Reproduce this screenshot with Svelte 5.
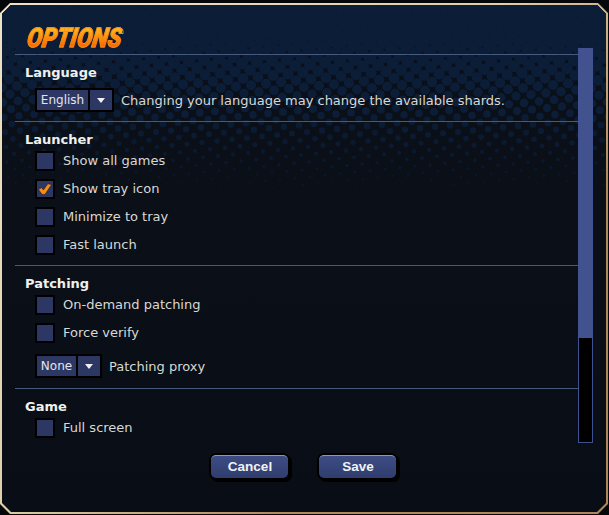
<script>
	const sections = [
		{ title: "Language", rows: [{ type: "select", value: "English", width: 51, label: "Changing your language may change the available shards." }] },
		{
			title: "Launcher",
			rows: [
				{ type: "check", label: "Show all games" },
				{ type: "check", label: "Show tray icon", checked: true },
				{ type: "check", label: "Minimize to tray" },
				{ type: "check", label: "Fast launch" },
			],
		},
		{
			title: "Patching",
			rows: [
				{ type: "check", label: "On-demand patching" },
				{ type: "check", label: "Force verify" },
				{ type: "select", value: "None", width: 39, label: "Patching proxy" },
			],
		},
		{ title: "Game", rows: [{ type: "check", label: "Full screen" }] },
	]

	// radius of a halftone dot by height, read off the reference
	const stops = [[0, 10.5], [25, 8.2], [50, 6.8], [70, 5.8], [120, 3.6], [170, 1.5], [205, 0.4], [225, 0]]

	function radius(y) {
		for (let i = 1; i < stops.length; i++) {
			const [y0, r0] = stops[i - 1]
			const [y1, r1] = stops[i]
			if (y <= y1) return r0 + ((Math.max(y, y0) - y0) / (y1 - y0)) * (r1 - r0)
		}
		return 0
	}

	const dots = []
	for (let i = -20; i < 60; i++) {
		for (let j = 0; j < 40; j++) {
			const x = i * 15 + j * 8
			const y = -i * 1.5 + j * 6.7 - 30
			const r = radius(y + 5)
			if (r > 0 && x > -12 && x < 620) {
				dots.push({ x, y, r, o: y > 110 ? Math.max(0.3, 1 - (y - 110) / 140) : 1 })
			}
		}
	}
</script>

<div class="page">
	<div class="frame">
		<div class="panel">
			<svg class="dots" width="609" height="240" aria-hidden="true">
				{#each dots as d}
					<circle cx={d.x} cy={d.y} r={d.r} fill="#0b1d37" opacity={d.o} />
				{/each}
			</svg>

			<div class="layout">
				<div class="main">
					<h1><span>OPTIONS</span></h1>
					{#each sections as section}
						<section>
							<h2>{section.title}</h2>
							{#each section.rows as row}
								{#if row.type === "check"}
									<div class="row check-row">
										<span class="box">
											{#if row.checked}
												<svg width="16" height="16" viewBox="0 0 16 16">
													<path d="M1.5 8.6 L5 13.4 L8 13.4 L14.6 3.6 L10.8 2.8 L6.4 9 L4.6 6.6 Z" fill="#f78c14" stroke="#0a0a12" stroke-width="0.5" />
												</svg>
											{/if}
										</span>
										<span class="label">{row.label}</span>
									</div>
								{:else}
									<div class="row select-row">
										<span class="select">
											<span class="value" style="width: {row.width}px">{row.value}</span>
											<span class="arrow"><i></i></span>
										</span>
										<span class="label">{row.label}</span>
									</div>
								{/if}
							{/each}
						</section>
					{/each}
				</div>
				<div class="scrollbar"><div class="thumb"></div></div>
			</div>

			<div class="buttons">
				<button>Cancel</button>
				<button>Save</button>
			</div>
		</div>
	</div>
</div>

<style>
	:global(body) {
		margin: 0;
		background: #05070b;
	}

	.page {
		width: 609px;
		height: 515px;
		padding-top: 3px;
		box-sizing: border-box;
		overflow: hidden;
		font-family: "DejaVu Sans", sans-serif;
	}

	.frame {
		width: 608px;
		height: 511px;
		box-sizing: border-box;
		padding: 2px;
		background: linear-gradient(135deg, #efe3c8 0%, #e0cfa8 45%, #b08c5c 70%, #ac8658 100%);
		clip-path: polygon(10px 0, 598px 0, 608px 10px, 608px 501px, 598px 511px, 10px 511px, 0 501px, 0 10px);
	}

	.panel {
		position: relative;
		height: 100%;
		box-sizing: border-box;
		padding: 0 13px;
		background: linear-gradient(#0a0f19 0, #0a0f18 240px, #090e16 100%);
		clip-path: polygon(9px 0, 595px 0, 604px 9px, 604px 498px, 595px 507px, 9px 507px, 0 498px, 0 9px);
	}

	.dots {
		position: absolute;
		left: 0;
		top: 0;
	}

	.layout {
		position: relative;
		display: flex;
		height: 438px;
	}

	.main {
		width: 563px;
		height: 438px;
		overflow: hidden;
	}

	h1 {
		margin: 0;
		height: 49px;
		box-sizing: border-box;
		padding: 18px 0 0 10px;
		font: italic 900 27px/30px Roboto, sans-serif;
	}

	h1 span {
		display: inline-block;
		color: transparent;
		background: linear-gradient(#ffb81f 20%, #f96400 80%);
		-webkit-background-clip: text;
		background-clip: text;
		-webkit-text-stroke: 0.9px #fb8a10;
		transform: skewX(-9deg) scaleX(0.84);
		transform-origin: left bottom;
	}

	section {
		border-top: 1px solid #47597c;
		padding: 10px 0 9px;
	}

	h2 {
		margin: 0 0 0 10px;
		font-size: 13px;
		line-height: 16px;
		font-weight: 700;
		color: #f0f0ec;
	}

	.row {
		display: flex;
		align-items: center;
		margin-left: 20px;
		font-size: 13px;
		color: #d8d8d4;
	}

	.check-row {
		height: 20px;
		margin-top: 8px;
	}

	.check-row:last-child {
		margin-bottom: 1px;
	}

	.check-row .label {
		padding-bottom: 2px;
	}

	h2 + .check-row {
		margin-top: 3px;
	}

	.select-row {
		height: 24px;
		margin-top: 11px;
		margin-bottom: 1px;
	}

	h2 + .select-row {
		margin-top: 7px;
		margin-bottom: 0;
	}

	.label {
		white-space: nowrap;
	}

	.box {
		display: flex;
		align-items: center;
		justify-content: center;
		width: 20px;
		height: 20px;
		box-sizing: border-box;
		border: 2px solid #000;
		background: #2d3763;
		margin-right: 8px;
	}

	.select {
		display: flex;
		gap: 2px;
		height: 24px;
		box-sizing: border-box;
		border: 2px solid #000;
		background: #000;
		margin-right: 7px;
	}

	.value {
		background: #2d3763;
		color: #e4e4ea;
		font-size: 12px;
		line-height: 20px;
		text-align: center;
	}

	.arrow {
		display: flex;
		align-items: center;
		justify-content: center;
		width: 22px;
		background: #2d3763;
	}

	.arrow i {
		width: 0;
		height: 0;
		border-left: 4px solid transparent;
		border-right: 4px solid transparent;
		border-top: 5px solid #f0f0f0;
	}

	.scrollbar {
		width: 15px;
		height: 395px;
		margin-top: 43px;
		box-sizing: border-box;
		border: 1px solid #3f5190;
		background: #000;
	}

	.thumb {
		height: 290px;
		margin: -1px;
		background: #41528f;
	}

	.buttons {
		position: relative;
		display: flex;
		gap: 31px;
		margin-top: 12px;
		margin-left: 196px;
	}

	button {
		width: 77px;
		height: 23px;
		padding: 0 0 1px 1px;
		border: none;
		border-top: 1px solid #8d98b8;
		border-radius: 5px;
		background: linear-gradient(#3d4c84, #2f3d6e);
		color: #f2f2f2;
		font: 700 13.5px "Liberation Sans", sans-serif;
		box-shadow: 0 0 0 2px #000, 2px 2px 0 2px #000;
	}
</style>
